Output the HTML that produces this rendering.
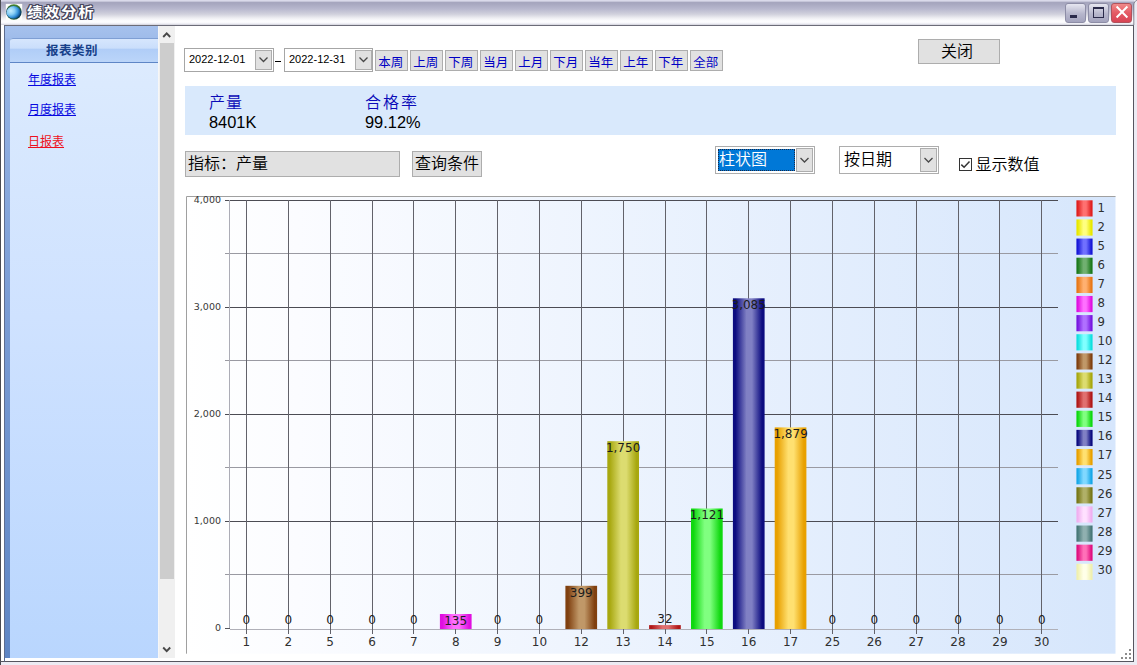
<!DOCTYPE html>
<html lang="zh-CN"><head><meta charset="utf-8"><title>绩效分析</title>
<style>
html,body{margin:0;padding:0}
body{width:1137px;height:665px;overflow:hidden;position:relative;background:#fff;font-family:"Liberation Sans","Noto Sans CJK SC",sans-serif;color:#000;font-weight:350}
.a{position:absolute}
#frame{left:0;top:0;width:1137px;height:665px;background:#ecebf3}
#titlebar{left:1px;top:0;width:1133px;height:25px;background:linear-gradient(to bottom,#dedeee 0,#d6d6e6 1px,#a6a6be 2.5px,#a8a8c0 4px,#b8b8ce 9px,#d0d0dc 14px,#eeeef2 18px,#fdfdff 21px,#f8f8fc 23px,#e6e6ee 24px,#cfcfd8 25px)}
#title{left:27px;top:0.5px;font-size:14px;line-height:22px;font-weight:bold;color:#fff;letter-spacing:1.5px;transform:scaleX(1.1);transform-origin:0 0;white-space:nowrap;text-shadow:-1px 0 #45455c,1px 0 #45455c,0 -1px #45455c,0 1px #45455c,-1px -1px #45455c,1px 1px #45455c,-1px 1px #45455c,1px -1px #45455c}
.wb{top:2.5px;width:20.5px;height:20px;border-radius:3px;border:1px solid #8d8da6;box-sizing:border-box;background:linear-gradient(to bottom,#e6e6f0,#b6b6cc 55%,#a4a4be)}
#client{left:4px;top:25px;width:1130px;height:637px;background:#fff;border:1px solid #6c6c78;border-left-color:#5d6c8e;border-right-color:#55555f;border-bottom-color:#55555f;box-sizing:border-box}
#lp{left:5px;top:26px;width:153px;height:632px;background:linear-gradient(to bottom,#a6c1ed 0,#9fbcea 12px,#99b7e7 13px,#7a9cd4 45%,#5f86c4 100%)}
#lpi{left:10px;top:38px;width:148px;height:620px;background:linear-gradient(to bottom,#deecfe 0,#d8e8fe 15%,#cfe2ff 45%,#b9d6fe 100%);border-top-left-radius:3px}
#lph{left:10px;top:38px;width:148px;height:25px;box-sizing:border-box;border-top:1px solid #7f9fd4;border-bottom:1px solid #5e86c6;border-top-left-radius:3px;background:linear-gradient(to bottom,#d6e6fd 0,#cadefb 40%,#b0cdf7 44%,#bbd5f9 100%)}
#lpht{left:46px;top:42px;font-size:12.5px;line-height:18px;font-weight:bold;color:#17408a;letter-spacing:0.5px}
.lk{left:28px;font-weight:400;font-size:12px;line-height:14px;color:#0808e0;text-decoration:underline}
#sb{left:158px;top:26px;width:17px;height:632px;background:linear-gradient(to right,#fafafa 0,#f0f0f0 1.5px)}
#sbt{left:159.5px;top:43px;width:14.5px;height:535.5px;background:#cdcdcd}
.dp{top:48px;width:89px;height:23.5px;font-weight:400;box-sizing:border-box;border:1px solid #a6a6a6;background:#fff;font-size:11px;line-height:21px;padding-left:4px}
.dd{width:17px;height:20px;box-sizing:border-box;border:1px solid #adadad;background:#e1e1e1}
.qb{position:absolute;font-weight:400;top:50px;width:33px;height:21px;box-sizing:border-box;border:1px solid #adadad;background:#e1e1e1;color:#0000c4;font-size:12.5px;line-height:24px;text-align:center;white-space:nowrap;padding-right:1.5px;overflow:hidden}
.btn{box-sizing:border-box;border:1px solid #adadad;background:#e1e1e1;font-size:16px;white-space:nowrap}
.cb{box-sizing:border-box;border:1px solid #adadad;background:#fff;height:28px;top:146px;width:100px}
</style></head><body>
<div id="frame" class="a"></div>
<div class="a" style="left:0;top:0;width:1px;height:665px;background:#4a4a50"></div>
<div id="titlebar" class="a"></div>
<div class="a" style="left:1px;top:25px;width:3px;height:636px;background:#fff"></div><div class="a" style="left:0;top:661px;width:1134px;height:1px;background:#55555f"></div>
<svg class="a" style="left:5px;top:3px" width="19" height="19" viewBox="5 3 19 19"><rect x="5.8" y="3.9" width="16.4" height="16.5" fill="#fdfefb"/><defs><radialGradient id="gl" cx="0.3" cy="0.38" r="0.75"><stop offset="0" stop-color="#c4eefe"/><stop offset="0.38" stop-color="#88cef4"/><stop offset="0.68" stop-color="#3896dc"/><stop offset="0.88" stop-color="#145c9c"/><stop offset="1" stop-color="#0a3c60"/></radialGradient><linearGradient id="glr" x1="0.55" y1="0" x2="0.45" y2="1"><stop offset="0" stop-color="#4a8c2c"/><stop offset="0.22" stop-color="#2c6438"/><stop offset="0.45" stop-color="#0c3c58"/><stop offset="0.8" stop-color="#0c3c4c"/><stop offset="1" stop-color="#346c30"/></linearGradient></defs><circle cx="13.9" cy="12" r="7.8" fill="url(#glr)"/><ellipse cx="13.6" cy="12.4" rx="7.1" ry="6.3" fill="url(#gl)"/></svg>
<svg class="a" style="left:1131px;top:0" width="6" height="26" viewBox="0 0 6 26"><path d="M6 0C4 1 3 2.5 2.8 5V25" stroke="#6a6a78" stroke-width="1" fill="none" opacity="0.8"/></svg>
<div id="title" class="a">绩效分析</div>
<div class="a wb" style="left:1065px"><div class="a" style="left:4px;top:11.5px;width:7px;height:3px;background:#2a2a4a"></div></div>
<div class="a wb" style="left:1088px"><div class="a" style="left:4px;top:3.5px;width:11px;height:11px;box-sizing:border-box;border:1px solid #2a2a4a;border-top-width:2px"></div></div>
<div class="a wb" style="left:1111px;width:21px;border-color:#b0525c;background:linear-gradient(to bottom,#f08a8a,#e45a64 50%,#d84454)"><svg class="a" style="left:3px;top:1.5px" width="14" height="14" viewBox="0 0 14 14"><path d="M1.6 1.5L12.4 12.5M12.4 1.5L1.6 12.5" stroke="#fff" stroke-width="2" fill="none"/></svg></div>

<div id="client" class="a"></div>
<div id="lp" class="a"></div>
<div id="lpi" class="a"></div>
<div id="lph" class="a"></div>
<div id="lpht" class="a">报表类别</div>
<div class="a lk" style="top:73px">年度报表</div>
<div class="a lk" style="top:103px">月度报表</div>
<div class="a lk" style="top:135px;color:#ee1020">日报表</div>
<div id="sb" class="a"></div>
<div id="sbt" class="a"></div>
<svg class="a" style="left:159px;top:26px" width="16" height="632" viewBox="0 0 16 632"><path d="M4.2 11L7.7 7.3L11.2 11" stroke="#484848" stroke-width="1.9" fill="none"/><path d="M4.2 621.5L7.7 625.2L11.2 621.5" stroke="#484848" stroke-width="1.9" fill="none"/></svg>

<div class="a dp" style="left:184px;width:90px">2022-12-01</div>
<div class="a dd" style="left:255px;top:50px"><svg width="15" height="18" viewBox="0 0 15 18"><path d="M3.5 6.5L7.5 10.5L11.5 6.5" stroke="#484848" stroke-width="1.3" fill="none"/></svg></div>
<div class="a" style="left:275px;top:60.7px;width:6px;height:1.5px;background:#000"></div>
<div class="a dp" style="left:284px;width:89px;padding-left:4px">2022-12-31</div>
<div class="a dd" style="left:355px;top:50px"><svg width="15" height="18" viewBox="0 0 15 18"><path d="M3.5 6.5L7.5 10.5L11.5 6.5" stroke="#484848" stroke-width="1.3" fill="none"/></svg></div>
<div class="qb" style="left:375px">本周</div>
<div class="qb" style="left:410px">上周</div>
<div class="qb" style="left:445px">下周</div>
<div class="qb" style="left:480px">当月</div>
<div class="qb" style="left:515px">上月</div>
<div class="qb" style="left:550px">下月</div>
<div class="qb" style="left:585px">当年</div>
<div class="qb" style="left:620px">上年</div>
<div class="qb" style="left:655px">下年</div>
<div class="qb" style="left:690px">全部</div>
<div class="a btn" style="left:918px;top:39px;width:82px;height:25px;line-height:23px;text-align:center;padding-right:4px">关闭</div>

<div class="a" style="left:185px;top:86px;width:931px;height:48.5px;background:#d9e9fc"></div>
<div class="a" style="left:209px;top:92.5px;font-size:16px;line-height:20px;color:#0a0ab8;letter-spacing:1px">产量</div>
<div class="a" style="left:209px;top:112px;font-size:16.4px;line-height:20px;font-weight:400">8401K</div>
<div class="a" style="left:365px;top:92.5px;font-size:16px;line-height:20px;color:#0a0ab8;letter-spacing:2px">合格率</div>
<div class="a" style="left:365px;top:112px;font-size:16.4px;line-height:20px;font-weight:400">99.12%</div>

<div class="a btn" style="left:185px;top:151px;width:215px;height:26px;line-height:24px;padding-left:2px">指标：产量</div>
<div class="a btn" style="left:412px;top:151px;width:70px;height:26px;line-height:24px;text-align:center">查询条件</div>

<div class="a cb" style="left:715px"></div>
<div class="a" style="left:718px;top:149px;width:77px;height:22px;background:#0078d7;outline:1px dotted #1a2a48;outline-offset:-1px"></div>
<div class="a" style="left:719px;top:149px;font-size:16px;line-height:22px;color:#fff">柱状图</div>
<div class="a dd" style="left:796px;top:148px;height:24px"><svg width="15" height="22" viewBox="0 -1.5 15 22"><path d="M3.5 7.5L7.5 11.5L11.5 7.5" stroke="#484848" stroke-width="1.3" fill="none"/></svg></div>
<div class="a cb" style="left:839px"></div>
<div class="a" style="left:844px;top:149px;font-size:16px;line-height:22px">按日期</div>
<div class="a dd" style="left:920px;top:148px;height:24px"><svg width="15" height="22" viewBox="0 -1.5 15 22"><path d="M3.5 7.5L7.5 11.5L11.5 7.5" stroke="#484848" stroke-width="1.3" fill="none"/></svg></div>
<div class="a" style="left:959px;top:158px;width:13px;height:13px;box-sizing:border-box;border:1px solid #333;background:#fff"><svg width="11" height="11" viewBox="0 0 11 11" style="display:block"><path d="M1.3 5.6L4.1 8.3L9.5 2.6" stroke="#333" stroke-width="1.5" fill="none"/></svg></div>
<div class="a" style="left:975.5px;top:153.5px;font-size:16px;line-height:22px">显示数值</div>

<svg id="chart" font-weight="400" width="931" height="459" viewBox="186 196 931 459" style="position:absolute;left:186px;top:196px">
<defs>
<linearGradient id="bg" x1="0" y1="0" x2="1" y2="0"><stop offset="0" stop-color="#ffffff"/><stop offset="0.12" stop-color="#fbfcff"/><stop offset="1" stop-color="#d6e6fc"/></linearGradient>
<linearGradient id="g0" x1="0" y1="0" x2="1" y2="0"><stop offset="0" stop-color="#e02020"/><stop offset="0.08" stop-color="#e02020"/><stop offset="0.43" stop-color="#ff7070"/><stop offset="0.6" stop-color="#ff7070"/><stop offset="0.92" stop-color="#e02020"/><stop offset="1" stop-color="#e02020"/></linearGradient>
<linearGradient id="g1" x1="0" y1="0" x2="1" y2="0"><stop offset="0" stop-color="#e8e800"/><stop offset="0.08" stop-color="#e8e800"/><stop offset="0.43" stop-color="#ffff80"/><stop offset="0.6" stop-color="#ffff80"/><stop offset="0.92" stop-color="#e8e800"/><stop offset="1" stop-color="#e8e800"/></linearGradient>
<linearGradient id="g2" x1="0" y1="0" x2="1" y2="0"><stop offset="0" stop-color="#1818d8"/><stop offset="0.08" stop-color="#1818d8"/><stop offset="0.43" stop-color="#7070ff"/><stop offset="0.6" stop-color="#7070ff"/><stop offset="0.92" stop-color="#1818d8"/><stop offset="1" stop-color="#1818d8"/></linearGradient>
<linearGradient id="g3" x1="0" y1="0" x2="1" y2="0"><stop offset="0" stop-color="#1c7a1c"/><stop offset="0.08" stop-color="#1c7a1c"/><stop offset="0.43" stop-color="#70b070"/><stop offset="0.6" stop-color="#70b070"/><stop offset="0.92" stop-color="#1c7a1c"/><stop offset="1" stop-color="#1c7a1c"/></linearGradient>
<linearGradient id="g4" x1="0" y1="0" x2="1" y2="0"><stop offset="0" stop-color="#e87818"/><stop offset="0.08" stop-color="#e87818"/><stop offset="0.43" stop-color="#ffb070"/><stop offset="0.6" stop-color="#ffb070"/><stop offset="0.92" stop-color="#e87818"/><stop offset="1" stop-color="#e87818"/></linearGradient>
<linearGradient id="g5" x1="0" y1="0" x2="1" y2="0"><stop offset="0" stop-color="#e010e0"/><stop offset="0.08" stop-color="#e010e0"/><stop offset="0.43" stop-color="#ff70ff"/><stop offset="0.6" stop-color="#ff70ff"/><stop offset="0.92" stop-color="#e010e0"/><stop offset="1" stop-color="#e010e0"/></linearGradient>
<linearGradient id="g6" x1="0" y1="0" x2="1" y2="0"><stop offset="0" stop-color="#7818e0"/><stop offset="0.08" stop-color="#7818e0"/><stop offset="0.43" stop-color="#b070ff"/><stop offset="0.6" stop-color="#b070ff"/><stop offset="0.92" stop-color="#7818e0"/><stop offset="1" stop-color="#7818e0"/></linearGradient>
<linearGradient id="g7" x1="0" y1="0" x2="1" y2="0"><stop offset="0" stop-color="#10e0e0"/><stop offset="0.08" stop-color="#10e0e0"/><stop offset="0.43" stop-color="#80ffff"/><stop offset="0.6" stop-color="#80ffff"/><stop offset="0.92" stop-color="#10e0e0"/><stop offset="1" stop-color="#10e0e0"/></linearGradient>
<linearGradient id="g8" x1="0" y1="0" x2="1" y2="0"><stop offset="0" stop-color="#804010"/><stop offset="0.08" stop-color="#804010"/><stop offset="0.43" stop-color="#c09868"/><stop offset="0.6" stop-color="#c09868"/><stop offset="0.92" stop-color="#804010"/><stop offset="1" stop-color="#804010"/></linearGradient>
<linearGradient id="g9" x1="0" y1="0" x2="1" y2="0"><stop offset="0" stop-color="#a8a810"/><stop offset="0.08" stop-color="#a8a810"/><stop offset="0.43" stop-color="#dcdc70"/><stop offset="0.6" stop-color="#dcdc70"/><stop offset="0.92" stop-color="#a8a810"/><stop offset="1" stop-color="#a8a810"/></linearGradient>
<linearGradient id="g10" x1="0" y1="0" x2="1" y2="0"><stop offset="0" stop-color="#b01818"/><stop offset="0.08" stop-color="#b01818"/><stop offset="0.43" stop-color="#e07070"/><stop offset="0.6" stop-color="#e07070"/><stop offset="0.92" stop-color="#b01818"/><stop offset="1" stop-color="#b01818"/></linearGradient>
<linearGradient id="g11" x1="0" y1="0" x2="1" y2="0"><stop offset="0" stop-color="#10d810"/><stop offset="0.08" stop-color="#10d810"/><stop offset="0.43" stop-color="#80ff80"/><stop offset="0.6" stop-color="#80ff80"/><stop offset="0.92" stop-color="#10d810"/><stop offset="1" stop-color="#10d810"/></linearGradient>
<linearGradient id="g12" x1="0" y1="0" x2="1" y2="0"><stop offset="0" stop-color="#0c0c80"/><stop offset="0.08" stop-color="#0c0c80"/><stop offset="0.43" stop-color="#8080c4"/><stop offset="0.6" stop-color="#8080c4"/><stop offset="0.92" stop-color="#0c0c80"/><stop offset="1" stop-color="#0c0c80"/></linearGradient>
<linearGradient id="g13" x1="0" y1="0" x2="1" y2="0"><stop offset="0" stop-color="#e8a000"/><stop offset="0.08" stop-color="#e8a000"/><stop offset="0.43" stop-color="#ffe070"/><stop offset="0.6" stop-color="#ffe070"/><stop offset="0.92" stop-color="#e8a000"/><stop offset="1" stop-color="#e8a000"/></linearGradient>
<linearGradient id="g14" x1="0" y1="0" x2="1" y2="0"><stop offset="0" stop-color="#18a8e8"/><stop offset="0.08" stop-color="#18a8e8"/><stop offset="0.43" stop-color="#80d8ff"/><stop offset="0.6" stop-color="#80d8ff"/><stop offset="0.92" stop-color="#18a8e8"/><stop offset="1" stop-color="#18a8e8"/></linearGradient>
<linearGradient id="g15" x1="0" y1="0" x2="1" y2="0"><stop offset="0" stop-color="#787818"/><stop offset="0.08" stop-color="#787818"/><stop offset="0.43" stop-color="#b0b068"/><stop offset="0.6" stop-color="#b0b068"/><stop offset="0.92" stop-color="#787818"/><stop offset="1" stop-color="#787818"/></linearGradient>
<linearGradient id="g16" x1="0" y1="0" x2="1" y2="0"><stop offset="0" stop-color="#f0b0f0"/><stop offset="0.08" stop-color="#f0b0f0"/><stop offset="0.43" stop-color="#ffe0ff"/><stop offset="0.6" stop-color="#ffe0ff"/><stop offset="0.92" stop-color="#f0b0f0"/><stop offset="1" stop-color="#f0b0f0"/></linearGradient>
<linearGradient id="g17" x1="0" y1="0" x2="1" y2="0"><stop offset="0" stop-color="#487878"/><stop offset="0.08" stop-color="#487878"/><stop offset="0.43" stop-color="#90b0b0"/><stop offset="0.6" stop-color="#90b0b0"/><stop offset="0.92" stop-color="#487878"/><stop offset="1" stop-color="#487878"/></linearGradient>
<linearGradient id="g18" x1="0" y1="0" x2="1" y2="0"><stop offset="0" stop-color="#e01080"/><stop offset="0.08" stop-color="#e01080"/><stop offset="0.43" stop-color="#ff70b8"/><stop offset="0.6" stop-color="#ff70b8"/><stop offset="0.92" stop-color="#e01080"/><stop offset="1" stop-color="#e01080"/></linearGradient>
<linearGradient id="g19" x1="0" y1="0" x2="1" y2="0"><stop offset="0" stop-color="#f0f0b0"/><stop offset="0.08" stop-color="#f0f0b0"/><stop offset="0.43" stop-color="#ffffe8"/><stop offset="0.6" stop-color="#ffffe8"/><stop offset="0.92" stop-color="#f0f0b0"/><stop offset="1" stop-color="#f0f0b0"/></linearGradient>
</defs>
<rect x="186" y="196" width="929.5" height="457.7" fill="url(#bg)"/>
<path d="M186.5 653.7V196.5H1115.5" fill="none" stroke="#a0a0a0" stroke-width="1"/>
<line x1="225" x2="1058" y1="200.5" y2="200.5" stroke="#4c4c54" stroke-width="1" shape-rendering="crispEdges"/>
<line x1="225" x2="1058" y1="253.5" y2="253.5" stroke="#9a9aa2" stroke-width="1" shape-rendering="crispEdges"/>
<line x1="225" x2="1058" y1="307.5" y2="307.5" stroke="#4c4c54" stroke-width="1" shape-rendering="crispEdges"/>
<line x1="225" x2="1058" y1="360.5" y2="360.5" stroke="#9a9aa2" stroke-width="1" shape-rendering="crispEdges"/>
<line x1="225" x2="1058" y1="414.5" y2="414.5" stroke="#4c4c54" stroke-width="1" shape-rendering="crispEdges"/>
<line x1="225" x2="1058" y1="467.5" y2="467.5" stroke="#9a9aa2" stroke-width="1" shape-rendering="crispEdges"/>
<line x1="225" x2="1058" y1="521.5" y2="521.5" stroke="#4c4c54" stroke-width="1" shape-rendering="crispEdges"/>
<line x1="225" x2="1058" y1="574.5" y2="574.5" stroke="#9a9aa2" stroke-width="1" shape-rendering="crispEdges"/>
<line x1="225" x2="230" y1="628.5" y2="628.5" stroke="#55555c" stroke-width="1" shape-rendering="crispEdges"/>
<line x1="230" x2="1058" y1="629.5" y2="629.5" stroke="#b0b0b8" stroke-width="1" shape-rendering="crispEdges"/>
<line x1="229.5" x2="229.5" y1="200" y2="628" stroke="#acacb6" stroke-width="1" shape-rendering="crispEdges"/>
<line x1="246.4" x2="246.4" y1="200" y2="634" stroke="#62626a" stroke-width="1" shape-rendering="crispEdges"/>
<line x1="288.3" x2="288.3" y1="200" y2="634" stroke="#62626a" stroke-width="1" shape-rendering="crispEdges"/>
<line x1="330.1" x2="330.1" y1="200" y2="634" stroke="#62626a" stroke-width="1" shape-rendering="crispEdges"/>
<line x1="372.0" x2="372.0" y1="200" y2="634" stroke="#62626a" stroke-width="1" shape-rendering="crispEdges"/>
<line x1="413.8" x2="413.8" y1="200" y2="634" stroke="#62626a" stroke-width="1" shape-rendering="crispEdges"/>
<line x1="455.7" x2="455.7" y1="200" y2="634" stroke="#62626a" stroke-width="1" shape-rendering="crispEdges"/>
<line x1="497.6" x2="497.6" y1="200" y2="634" stroke="#62626a" stroke-width="1" shape-rendering="crispEdges"/>
<line x1="539.4" x2="539.4" y1="200" y2="634" stroke="#62626a" stroke-width="1" shape-rendering="crispEdges"/>
<line x1="581.3" x2="581.3" y1="200" y2="634" stroke="#62626a" stroke-width="1" shape-rendering="crispEdges"/>
<line x1="623.1" x2="623.1" y1="200" y2="634" stroke="#62626a" stroke-width="1" shape-rendering="crispEdges"/>
<line x1="665.0" x2="665.0" y1="200" y2="634" stroke="#62626a" stroke-width="1" shape-rendering="crispEdges"/>
<line x1="706.9" x2="706.9" y1="200" y2="634" stroke="#62626a" stroke-width="1" shape-rendering="crispEdges"/>
<line x1="748.7" x2="748.7" y1="200" y2="634" stroke="#62626a" stroke-width="1" shape-rendering="crispEdges"/>
<line x1="790.6" x2="790.6" y1="200" y2="634" stroke="#62626a" stroke-width="1" shape-rendering="crispEdges"/>
<line x1="832.4" x2="832.4" y1="200" y2="634" stroke="#62626a" stroke-width="1" shape-rendering="crispEdges"/>
<line x1="874.3" x2="874.3" y1="200" y2="634" stroke="#62626a" stroke-width="1" shape-rendering="crispEdges"/>
<line x1="916.2" x2="916.2" y1="200" y2="634" stroke="#62626a" stroke-width="1" shape-rendering="crispEdges"/>
<line x1="958.0" x2="958.0" y1="200" y2="634" stroke="#62626a" stroke-width="1" shape-rendering="crispEdges"/>
<line x1="999.9" x2="999.9" y1="200" y2="634" stroke="#62626a" stroke-width="1" shape-rendering="crispEdges"/>
<line x1="1041.7" x2="1041.7" y1="200" y2="634" stroke="#62626a" stroke-width="1" shape-rendering="crispEdges"/>
<g font-family="'DejaVu Sans','Liberation Sans',sans-serif" font-size="9.5" fill="#383838" text-anchor="end">
<text x="221" y="202.8">4,000</text>
<text x="221" y="309.9">3,000</text>
<text x="221" y="416.9">2,000</text>
<text x="221" y="524.0">1,000</text>
<text x="221" y="631.0">0</text>
</g>
<rect x="439.9" y="614.0" width="31.7" height="15.0" fill="url(#g5)"/>
<rect x="565.4" y="585.8" width="31.7" height="43.2" fill="url(#g8)"/>
<rect x="607.3" y="441.2" width="31.7" height="187.8" fill="url(#g9)"/>
<rect x="649.1" y="625.1" width="31.7" height="3.9" fill="url(#g10)"/>
<rect x="691.0" y="508.5" width="31.7" height="120.5" fill="url(#g11)"/>
<rect x="732.9" y="298.3" width="31.7" height="330.7" fill="url(#g12)"/>
<rect x="774.7" y="427.4" width="31.7" height="201.6" fill="url(#g13)"/>
<g font-family="'DejaVu Sans','Liberation Sans',sans-serif" font-size="12" fill="#1c1c1c" text-anchor="middle">
<text x="246.4" y="624.0">0</text>
<text x="288.3" y="624.0">0</text>
<text x="330.1" y="624.0">0</text>
<text x="372.0" y="624.0">0</text>
<text x="413.8" y="624.0">0</text>
<text x="455.7" y="624.7">135</text>
<text x="497.6" y="624.0">0</text>
<text x="539.4" y="624.0">0</text>
<text x="581.3" y="596.5">399</text>
<text x="623.1" y="451.9">1,750</text>
<text x="665.0" y="623.1">32</text>
<text x="706.9" y="519.2">1,121</text>
<text x="748.7" y="309.0">3,085</text>
<text x="790.6" y="438.1">1,879</text>
<text x="832.4" y="624.0">0</text>
<text x="874.3" y="624.0">0</text>
<text x="916.2" y="624.0">0</text>
<text x="958.0" y="624.0">0</text>
<text x="999.9" y="624.0">0</text>
<text x="1041.7" y="624.0">0</text>
</g>
<g font-family="'DejaVu Sans','Liberation Sans',sans-serif" font-size="12" fill="#303030" text-anchor="middle">
<text x="246.4" y="645.5">1</text>
<text x="288.3" y="645.5">2</text>
<text x="330.1" y="645.5">5</text>
<text x="372.0" y="645.5">6</text>
<text x="413.8" y="645.5">7</text>
<text x="455.7" y="645.5">8</text>
<text x="497.6" y="645.5">9</text>
<text x="539.4" y="645.5">10</text>
<text x="581.3" y="645.5">12</text>
<text x="623.1" y="645.5">13</text>
<text x="665.0" y="645.5">14</text>
<text x="706.9" y="645.5">15</text>
<text x="748.7" y="645.5">16</text>
<text x="790.6" y="645.5">17</text>
<text x="832.4" y="645.5">25</text>
<text x="874.3" y="645.5">26</text>
<text x="916.2" y="645.5">27</text>
<text x="958.0" y="645.5">28</text>
<text x="999.9" y="645.5">29</text>
<text x="1041.7" y="645.5">30</text>
</g>
<g font-family="'DejaVu Sans','Liberation Sans',sans-serif" font-size="11.7" fill="#303030">
<rect x="1076.4" y="200.30" width="16.2" height="16.2" fill="url(#g0)"/>
<text x="1097.5" y="211.70">1</text>
<rect x="1076.4" y="219.43" width="16.2" height="16.2" fill="url(#g1)"/>
<text x="1097.5" y="230.76">2</text>
<rect x="1076.4" y="238.56" width="16.2" height="16.2" fill="url(#g2)"/>
<text x="1097.5" y="249.82">5</text>
<rect x="1076.4" y="257.69" width="16.2" height="16.2" fill="url(#g3)"/>
<text x="1097.5" y="268.88">6</text>
<rect x="1076.4" y="276.82" width="16.2" height="16.2" fill="url(#g4)"/>
<text x="1097.5" y="287.94">7</text>
<rect x="1076.4" y="295.95" width="16.2" height="16.2" fill="url(#g5)"/>
<text x="1097.5" y="307.00">8</text>
<rect x="1076.4" y="315.08" width="16.2" height="16.2" fill="url(#g6)"/>
<text x="1097.5" y="326.06">9</text>
<rect x="1076.4" y="334.21" width="16.2" height="16.2" fill="url(#g7)"/>
<text x="1097.5" y="345.12">10</text>
<rect x="1076.4" y="353.34" width="16.2" height="16.2" fill="url(#g8)"/>
<text x="1097.5" y="364.18">12</text>
<rect x="1076.4" y="372.47" width="16.2" height="16.2" fill="url(#g9)"/>
<text x="1097.5" y="383.24">13</text>
<rect x="1076.4" y="391.60" width="16.2" height="16.2" fill="url(#g10)"/>
<text x="1097.5" y="402.30">14</text>
<rect x="1076.4" y="410.73" width="16.2" height="16.2" fill="url(#g11)"/>
<text x="1097.5" y="421.36">15</text>
<rect x="1076.4" y="429.86" width="16.2" height="16.2" fill="url(#g12)"/>
<text x="1097.5" y="440.42">16</text>
<rect x="1076.4" y="448.99" width="16.2" height="16.2" fill="url(#g13)"/>
<text x="1097.5" y="459.48">17</text>
<rect x="1076.4" y="468.12" width="16.2" height="16.2" fill="url(#g14)"/>
<text x="1097.5" y="478.54">25</text>
<rect x="1076.4" y="487.25" width="16.2" height="16.2" fill="url(#g15)"/>
<text x="1097.5" y="497.60">26</text>
<rect x="1076.4" y="506.38" width="16.2" height="16.2" fill="url(#g16)"/>
<text x="1097.5" y="516.66">27</text>
<rect x="1076.4" y="525.51" width="16.2" height="16.2" fill="url(#g17)"/>
<text x="1097.5" y="535.72">28</text>
<rect x="1076.4" y="544.64" width="16.2" height="16.2" fill="url(#g18)"/>
<text x="1097.5" y="554.78">29</text>
<rect x="1076.4" y="563.77" width="16.2" height="16.2" fill="url(#g19)"/>
<text x="1097.5" y="573.84">30</text>
</g>
</svg>
<svg class="a" style="left:1120px;top:648px" width="12" height="12" viewBox="0 0 12 12" fill="#8c8c8c"><rect x="9" y="1" width="2" height="2"/><rect x="5" y="5" width="2" height="2"/><rect x="9" y="5" width="2" height="2"/><rect x="1" y="9" width="2" height="2"/><rect x="5" y="9" width="2" height="2"/><rect x="9" y="9" width="2" height="2"/></svg>
</body></html>
